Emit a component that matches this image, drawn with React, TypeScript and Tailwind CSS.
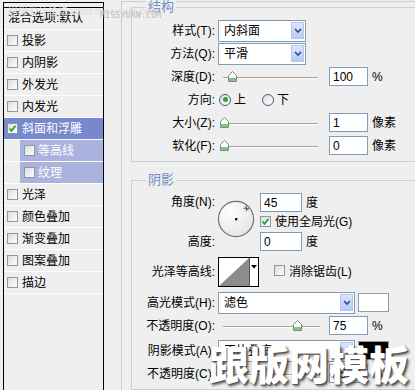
import type React from "react";

// little XP-style widgets used by the layer style dialog
const Check = ({ checked = false }: { checked?: boolean }) => (
  <span className="relative inline-block h-[11px] w-[11px] shrink-0 border border-[#8a98a8] bg-gradient-to-br from-[#dcdcdc] to-white">
    {checked && (
      <svg viewBox="0 0 9 9" className="absolute left-0 top-0 h-[9px] w-[9px]">
        <path d="M1.5 4.5 L3.5 6.8 L7.6 1.8" fill="none" stroke="#27a327" strokeWidth="1.8" />
      </svg>
    )}
  </span>
);

const Radio = ({ on = false }: { on?: boolean }) => (
  <span className="flex h-[12px] w-[12px] shrink-0 items-center justify-center rounded-full border border-[#3f5e86] bg-gradient-to-br from-[#dcdcdc] to-white">
    {on && <span className="h-[5px] w-[5px] rounded-full bg-[#2fa32f]" />}
  </span>
);

const Select = ({ value, w }: { value: string; w: string }) => (
  <div className={`flex h-[22px] items-center border border-[#7f9db9] bg-white pl-[5px] pr-[1px] ${w}`}>
    <span className="flex-1 leading-none">{value}</span>
    <span className="flex h-[17px] w-[13px] items-center justify-center border border-[#b3c6ee] bg-gradient-to-b from-[#dbe5fb] to-[#b8cbf4]">
      <svg viewBox="0 0 8 6" className="h-[6px] w-[8px]">
        <path d="M1 1 L4 4 L7 1" fill="none" stroke="#2f4b86" strokeWidth="1.6" />
      </svg>
    </span>
  </div>
);

const Field = ({ value, className = "" }: { value: string; className?: string }) => (
  <div className={`flex h-[19px] w-[39px] items-center border border-[#7f9db9] bg-white pl-[3px] leading-none ${className}`}>
    {value}
  </div>
);

const Slider = ({ w, thumb }: { w: string; thumb: number }) => (
  <div className={`relative h-[12px] shrink-0 ${w}`}>
    <div className="absolute left-[5px] right-0 top-[6px] h-[2px] border-t border-[#a3a3a3] border-b border-b-white" />
    <svg viewBox="0 0 9 11" className="absolute top-0 h-[11px] w-[9px]" style={{ left: thumb }}>
      <path d="M0.5 4.5 L4.5 0.5 L8.5 4.5 V10.5 H0.5 Z" fill="#ffffff" stroke="#7d8a7d" />
      <rect x="1" y="7" width="7" height="3" fill="#7fc57f" />
    </svg>
  </div>
);

const Label = ({ children }: { children: React.ReactNode }) => (
  <span className="w-[83px] shrink-0 text-right leading-none">{children}</span>
);

const Row = ({ children, className = "" }: { children: React.ReactNode; className?: string }) => (
  <div className={`flex h-[23px] items-center ${className}`}>{children}</div>
);

const GroupBox = ({ title, className = "", children }: { title: string; className?: string; children: React.ReactNode }) => (
  <div className={`relative border-b border-l border-t border-[#c8cedb] ${className}`}>
    <span className="absolute left-[14px] top-[-8px] bg-[#efefef] px-[2px] text-[13px] leading-[14px] text-[#6f8fc9]">
      {title}
    </span>
    {children}
  </div>
);

const items = [
  { t: "投影" },
  { t: "内阴影" },
  { t: "外发光" },
  { t: "内发光" },
  { t: "斜面和浮雕", sel: true, checked: true },
  { t: "等高线", sub: true },
  { t: "纹理", sub: true },
  { t: "光泽" },
  { t: "颜色叠加" },
  { t: "渐变叠加" },
  { t: "图案叠加" },
  { t: "描边" },
];

function StyleList() {
  return (
    <div className="h-full pl-[3px] pt-[2px]">
      <div className="h-full w-[101px] border-x border-t border-black">
        <div className="h-[4px]" />
        <div className="border-t border-black" />
        <div className="h-[22px] border-b border-white pl-[4px] leading-[21px]">混合选项:默认</div>
        {items.map((it) =>
          it.sub ? (
            <div key={it.t} className="h-[22px] border-b border-white pl-[16px]">
              <div className="flex h-[21px] items-center gap-[3px] bg-[#a9b3de] pl-[4px] text-white">
                <Check />
                <span className="leading-none">{it.t}</span>
              </div>
            </div>
          ) : (
            <div
              key={it.t}
              className={`flex h-[22px] items-center gap-[4px] border-b border-white pl-[3px] ${it.sel ? "bg-[#7888cc] text-white" : ""}`}
            >
              <Check checked={it.checked} />
              <span className="leading-none">{it.t}</span>
            </div>
          )
        )}
      </div>
    </div>
  );
}

function AngleDial() {
  return (
    <svg viewBox="0 0 40 40" className="h-[38px] w-[38px] shrink-0">
      <defs>
        <radialGradient id="dial" cx="35%" cy="30%" r="75%">
          <stop offset="0%" stopColor="#ffffff" />
          <stop offset="100%" stopColor="#e4e4e4" />
        </radialGradient>
      </defs>
      <circle cx="20" cy="20" r="18.5" fill="url(#dial)" stroke="#6e6e6e" strokeWidth="1.2" />
      <rect x="19" y="19" width="2.4" height="2.4" fill="#000" />
      <path d="M31 6 V12 M28 9 H34 M29 7 L33 11" stroke="#555" strokeWidth="0.9" />
    </svg>
  );
}

function Contour() {
  return (
    <div className="flex h-[30px] w-[41px] shrink-0 border border-black bg-white">
      <svg viewBox="0 0 30 28" className="h-[28px] w-[30px]">
        <path d="M0 28 L30 0 V28 Z" fill="#8c8c8c" />
      </svg>
      <div className="flex flex-1 items-start justify-center border-l border-[#555] pt-[7px]">
        <svg viewBox="0 0 6 4" className="h-[4px] w-[6px]">
          <path d="M0 0 H6 L3 3.5 Z" fill="#000" />
        </svg>
      </div>
    </div>
  );
}

export default function App() {
  return (
    <div className="relative flex h-[390px] w-[415px] overflow-hidden bg-[#efefef] font-['Liberation_Sans','Noto_Sans_CJK_SC',sans-serif] text-[12px] text-black">
      <StyleList />

      <div className="flex-1 pl-[17px] pt-[1px]">
        <div className="h-full border-l border-t border-[#c9cbd6] pl-[9px] pt-[5px]">
          <GroupBox title="结构" className="pb-[4px] pt-[11px]">
            <Row>
              <Label>样式(T):</Label>
              <div className="ml-[3px]">
                <Select value="内斜面" w="w-[88px]" />
              </div>
            </Row>
            <Row>
              <Label>方法(Q):</Label>
              <div className="ml-[3px]">
                <Select value="平滑" w="w-[88px]" />
              </div>
            </Row>
            <Row>
              <Label>深度(D):</Label>
              <div className="ml-[3px] flex items-center">
                <Slider w="w-[100px]" thumb={10} />
                <Field value="100" className="ml-[11px]" />
                <span className="ml-[4px] leading-none">%</span>
              </div>
            </Row>
            <Row>
              <Label>方向:</Label>
              <div className="ml-[4px] flex items-center">
                <Radio on />
                <span className="ml-[3px] leading-none">上</span>
                <span className="ml-[16px]">
                  <Radio />
                </span>
                <span className="ml-[3px] leading-none">下</span>
              </div>
            </Row>
            <Row>
              <Label>大小(Z):</Label>
              <div className="ml-[3px] flex items-center">
                <Slider w="w-[100px]" thumb={2} />
                <Field value="1" className="ml-[11px]" />
                <span className="ml-[4px] leading-none">像素</span>
              </div>
            </Row>
            <Row>
              <Label>软化(F):</Label>
              <div className="ml-[3px] flex items-center">
                <Slider w="w-[100px]" thumb={2} />
                <Field value="0" className="ml-[11px]" />
                <span className="ml-[4px] leading-none">像素</span>
              </div>
            </Row>
          </GroupBox>

          <GroupBox title="阴影" className="mt-[18px] pb-[4px] pt-[11px]">
            <div className="flex h-[60px]">
              <div className="flex w-[83px] shrink-0 flex-col justify-between text-right">
                <span className="leading-[20px]">角度(N):</span>
                <span className="leading-[20px]">高度:</span>
              </div>
              <div className="ml-[2px] mt-[8px]">
                <AngleDial />
              </div>
              <div className="ml-[5px] flex flex-col">
                <div className="mt-[1px] flex items-center">
                  <Field value="45" className="w-[42px]" />
                  <span className="ml-[4px] leading-none">度</span>
                </div>
                <div className="flex h-[19px] items-center gap-[4px]">
                  <Check checked />
                  <span className="leading-none">使用全局光(G)</span>
                </div>
                <div className="mt-[1px] flex items-center">
                  <Field value="0" className="w-[42px]" />
                  <span className="ml-[4px] leading-none">度</span>
                </div>
              </div>
            </div>

            <div className="mt-[4px] flex h-[31px] items-center">
              <Label>光泽等高线:</Label>
              <div className="ml-[3px]">
                <Contour />
              </div>
              <span className="ml-[15px]">
                <Check />
              </span>
              <span className="ml-[4px] leading-none">消除锯齿(L)</span>
            </div>

            <Row className="mt-[4px] h-[22px]">
              <Label>高光模式(H):</Label>
              <div className="ml-[3px]">
                <Select value="滤色" w="w-[137px]" />
              </div>
              <div className="ml-[3px] h-[19px] w-[31px] border border-[#9a9a9a] bg-white" />
            </Row>
            <Row className="h-[22px]">
              <Label>不透明度(O):</Label>
              <div className="ml-[3px] flex items-center">
                <Slider w="w-[102px]" thumb={75} />
                <Field value="75" className="ml-[9px]" />
                <span className="ml-[4px] leading-none">%</span>
              </div>
            </Row>
            <Row className="mt-[2px] h-[22px]">
              <Label>阴影模式(A):</Label>
              <div className="ml-[3px]">
                <Select value="正片叠底" w="w-[137px]" />
              </div>
              <div className="ml-[3px] h-[19px] w-[31px] border border-[#9a9a9a] bg-black" />
            </Row>
            <Row className="h-[22px]">
              <Label>不透明度(C):</Label>
              <div className="ml-[3px] flex items-center">
                <Slider w="w-[102px]" thumb={75} />
                <Field value="75" className="ml-[9px]" />
                <span className="ml-[4px] leading-none">%</span>
              </div>
            </Row>
          </GroupBox>
        </div>
      </div>

      {/* watermarks over the dialog */}
      <span className="pointer-events-none absolute left-[8px] top-[7px] text-[10px] leading-none text-[#dedede]">
        思缘设计论坛 www.missyuan.com
      </span>
      <span className="pointer-events-none absolute left-[100px] top-[12px] font-['DejaVu_Sans_Mono',monospace] text-[8px] leading-none tracking-[0.3px] text-[#bcbcbc]">
        MISSYUAN.COM
      </span>
      <span className="pointer-events-none absolute left-[209px] top-[343px] font-['Noto_Sans_CJK_SC',sans-serif] text-[40px] font-black leading-none text-white [text-shadow:1px_1px_0_#555,2px_2px_3px_rgba(0,0,0,0.7)]">
        跟版网模板
      </span>
    </div>
  );
}
